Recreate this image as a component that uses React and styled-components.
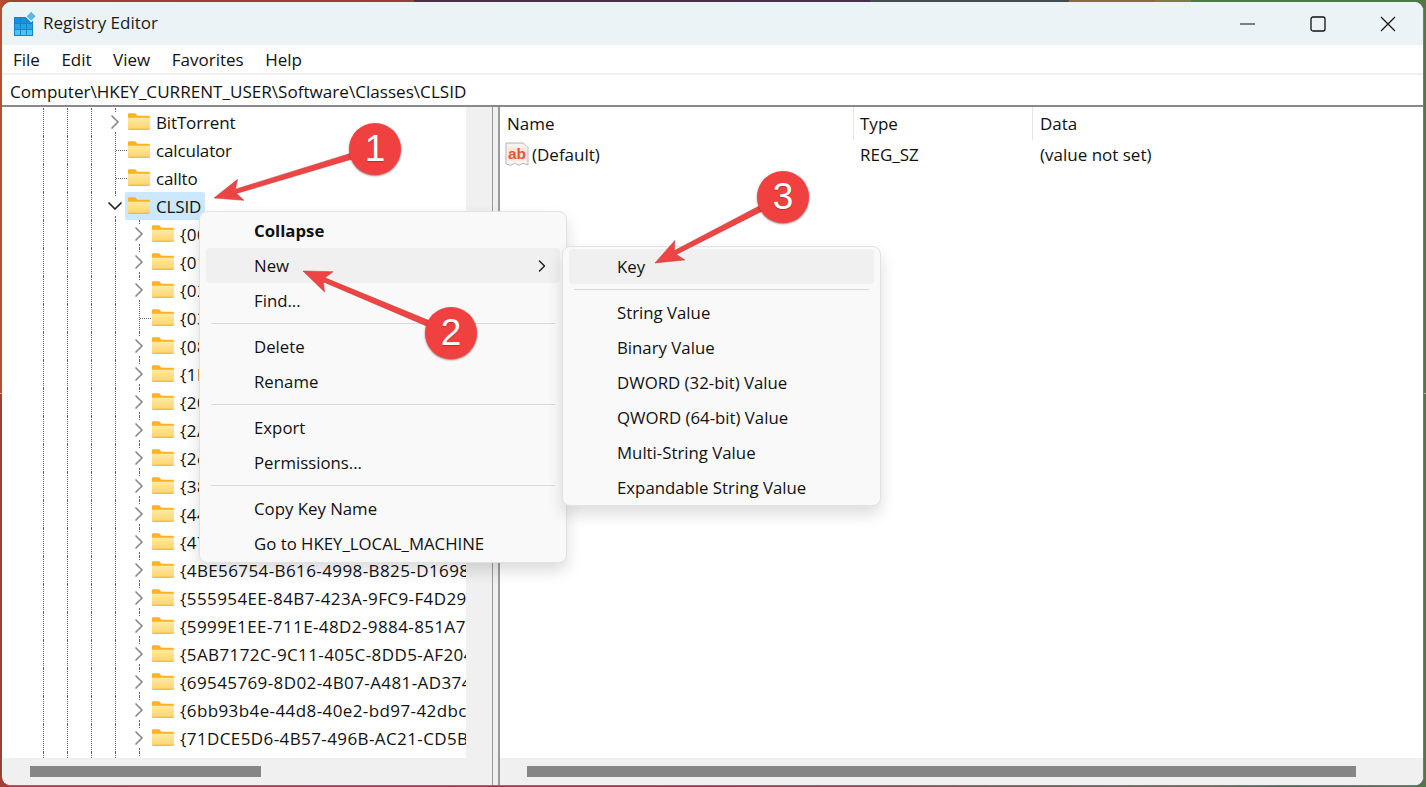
import React from 'react';
import styled, { createGlobalStyle } from 'styled-components';
import { ChevronRight, ChevronDown } from 'lucide-react';

const Global = createGlobalStyle`
  html, body { margin: 0; padding: 0; width: 1426px; height: 787px; overflow: hidden; }
  body { font-family: "Open Sans", "Noto Sans", sans-serif; color: #111; }
`;

const Desktop = styled.div`
  position: relative;
  width: 1426px;
  height: 787px;
  box-sizing: border-box;
  padding: 2px 2px 2px 2px;
  overflow: hidden;
  background:
    linear-gradient(90deg, #b9502f 0, #a03f38 1%, #983c3c 29%, #453048 29%, #45304c 61%, #3f4c50 61%, #3f4c50 75%, #8a6a45 75%, #8a6a45 81%, #7d7d45 81%, #7d7d45 83.5%, #4f7a45 83.5%, #4f7a45 100%) top / 100% 50% no-repeat,
    linear-gradient(90deg, #a03f38 0, #8f3a3a 50%, #7f5545 70%, #6e6a45 85%, #3f6a48 90%, #4f7a45 100%) bottom / 100% 50% no-repeat;
`;

const Window = styled.div`
  height: 100%;
  display: flex;
  flex-direction: column;
  background: #fff;
  border-radius: 9px;
  overflow: hidden;
  border-right: 1px solid #77777c;
  border-bottom: 1px solid #77777c;
`;

const TitleBar = styled.div`
  height: 43px;
  flex: none;
  display: flex;
  align-items: center;
  background: #ecf3f7;
  padding-left: 11px;
`;

const TitleText = styled.span`
  font-size: 17px;
  margin-left: 6px;
  flex: 1;
  color: #1a1a1a;
  transform: translateY(-1px);
`;

const WinButton = styled.div`
  width: 70px;
  height: 43px;
  display: flex;
  align-items: center;
  justify-content: center;
`;

const MenuBar = styled.div`
  height: 28px;
  flex: none;
  display: flex;
  align-items: center;
  gap: 21.5px;
  padding-left: 11px;
  font-size: 17px;
  background: #fff;
`;

const AddressBar = styled.div`
  height: 34px;
  flex: none;
  display: flex;
  align-items: center;
  box-sizing: border-box;
  padding: 2px 0 0 8px;
  font-size: 17.1px;
  background: #fff;
  border-top: 2px solid #f0f0f0;
  border-bottom: 2px solid #88888e;
  white-space: nowrap;
`;

const Panes = styled.div`
  flex: 1;
  min-height: 0;
  display: flex;
`;

const TreePane = styled.div`
  width: 489px;
  flex: none;
  display: flex;
  flex-direction: column;
  padding-left: 1px;
`;

const TreeBody = styled.div`
  flex: 1;
  min-height: 0;
  display: flex;
`;

const TreeList = styled.div`
  width: 463px;
  flex: none;
  overflow: hidden;
  padding-top: 1px;
`;

const VTrack = styled.div`
  flex: 1;
  background: #f0f0f0;
`;

const HTrack = styled.div`
  height: 27px;
  flex: none;
  background: #f0f0f0;
  display: flex;
  align-items: center;
  padding-left: ${p => p.$start}px;
`;

const Thumb = styled.div`
  width: ${p => p.$w}px;
  height: 11px;
  background: #868686;
`;

const Splitter = styled.div`
  flex: none;
  background: #f0f0f0;
  border-left: 1px solid #9a9a9a;
  border-right: 2px solid #9a9a9a;
  width: 5px;
`;

const ListPane = styled.div`
  flex: 1;
  min-width: 0;
  display: flex;
  flex-direction: column;
`;

const ListBody = styled.div`
  flex: 1;
  min-height: 0;
`;

const HeaderRow = styled.div`
  height: 33px;
  display: grid;
  grid-template-columns: 354px 179px 1fr;
  align-items: center;
  font-size: 17px;
`;

const HeaderCell = styled.div`
  height: 33px;
  display: flex;
  align-items: center;
  padding-left: ${p => p.$pad}px;
  box-sizing: border-box;
  border-right: ${p => (p.$sep ? '1px solid #e5e5e5' : 'none')};
`;

const ValueRow = styled.div`
  height: 28px;
  display: grid;
  grid-template-columns: 354px 179px 1fr;
  align-items: center;
  font-size: 17px;
`;

const ValueCell = styled.div`
  display: flex;
  align-items: center;
  gap: 3px;
  padding-left: ${p => p.$pad}px;
`;

const Row = styled.div`
  height: 28px;
  display: flex;
  align-items: stretch;
  font-size: 17px;
  white-space: nowrap;
`;

const Lead = styled.div`
  width: 40px;
  flex: none;
`;

const Guide = styled.div`
  width: ${p => (p.$short ? 12 : 24)}px;
  flex: none;
  box-sizing: border-box;
  border-left: 1px dotted #666;
`;

const Expander = styled.div`
  width: 24px;
  flex: none;
  display: flex;
  align-items: center;
  justify-content: center;
  position: relative;
  background-image: ${p => (p.$branch
    ? 'repeating-linear-gradient(0deg, #666 0 1px, transparent 1px 2px), repeating-linear-gradient(90deg, #666 0 1px, transparent 1px 2px)'
    : 'none')};
  background-size: 1px 100%, 11px 1px;
  background-position: 12px 0, 13px 14px;
  background-repeat: no-repeat;
  color: ${p => (p.$open ? '#222' : '#8a8a8a')};
  &::before, &::after {
    content: ${p => (p.$branch ? 'none' : "''")};
    position: absolute;
    left: 12px;
    height: 4px;
    border-left: 1px dotted #666;
  }
  &::before { top: 0; }
  &::after { bottom: 0; }
`;

const Node = styled.div`
  height: 28px;
  display: flex;
  align-items: center;
  flex: none;
  margin-left: -2px;
  padding: 0 4px 0 3px;
  border-radius: 2px;
  gap: 6px;
  background: ${p => (p.$selected ? '#cce8ff' : 'transparent')};
`;

const NodeLabel = styled.span`
  letter-spacing: ${p => (p.$guid ? '0.4px' : '-0.15px')};
`;

const FolderSvg = styled.svg`
  flex: none;
  margin-top: -2px;
`;

const MenuPanel = styled.div`
  position: absolute;
  left: ${p => p.$x}px;
  top: ${p => p.$y}px;
  width: ${p => p.$w}px;
  box-sizing: border-box;
  padding: ${p => p.$pad};
  background: #f9f9f9;
  border: 1px solid #e2e2e2;
  border-radius: 8px;
  box-shadow: 0 8px 16px rgba(0, 0, 0, 0.14);
  font-size: 16.8px;
  z-index: ${p => p.$z};
`;

const MenuItem = styled.div`
  height: 35px;
  margin: 0 6px;
  padding: 0 8px 0 48px;
  border-radius: 4px;
  display: flex;
  align-items: center;
  justify-content: space-between;
  box-sizing: border-box;
  color: #111;
  white-space: nowrap;
  background: ${p => (p.$hover ? '#f0f0f0' : 'transparent')};
  font-weight: ${p => (p.$bold ? 700 : 400)};
`;

const MenuSep = styled.div`
  height: 11px;
  margin: 0 11px;
  display: flex;
  align-items: center;
  &::after { content: ''; flex: 1; height: 1px; background: #d9d9d9; }
`;

const Overlay = styled.svg`
  position: absolute;
  left: 0;
  top: 0;
  width: 1426px;
  height: 787px;
  pointer-events: none;
  z-index: 5;
`;

const Badge = styled.div`
  position: absolute;
  left: ${p => p.$x - 26}px;
  top: ${p => p.$y - 26}px;
  width: 52px;
  height: 52px;
  border-radius: 50%;
  background: #f04040;
  box-shadow: 0 1px 2px rgba(90, 20, 20, 0.6);
  color: #fff;
  font-family: "Liberation Sans", Arial, sans-serif;
  font-size: 37px;
  line-height: 52px;
  text-align: center;
  text-shadow: 0 1px 1px rgba(0, 0, 0, 0.25);
  z-index: 6;
`;

const FolderIcon = () => (
  <FolderSvg width="22" height="17" viewBox="0 0 23 17">
    <defs>
      <linearGradient id="fold" x1="0" y1="0" x2="0" y2="1">
        <stop offset="0" stopColor="#ffe9a6" />
        <stop offset="1" stopColor="#fcd56a" />
      </linearGradient>
    </defs>
    <path d="M0 1.2C0 .5.5 0 1.2 0h5.6c.5 0 .9.2 1.2.5L10 2.5h12c.6 0 1 .4 1 1V5H0z" fill="#f6b420" />
    <path d="M0 4.5h23V16c0 .6-.4 1-1 1H1c-.6 0-1-.4-1-1z" fill="url(#fold)" />
    <path d="M0 16h23v.2c0 .5-.4.8-1 .8H1c-.6 0-1-.3-1-.8z" fill="#eeb030" />
  </FolderSvg>
);

const AppIcon = () => (
  <svg width="24" height="24" viewBox="0 0 24 24">
    <rect x="1" y="5" width="19" height="19" fill="#1483c8" />
    {[0, 1, 2].map(r => [0, 1, 2].map(c => (
      <rect key={`${r}${c}`} x={2 + c * 6} y={6 + r * 6} width="5" height="5" fill={r === 2 ? '#4cc3f5' : r === 1 ? '#2aa2e2' : '#1c8fd6'} />
    )))}
    <rect x="14.5" y="0.5" width="7.5" height="7.5" transform="rotate(45 18.2 4.2)" fill="#5cb8e8" stroke="#fff" strokeWidth="1" />
  </svg>
);

const AbIcon = () => (
  <svg width="24" height="25" viewBox="0 0 24 25">
    <path d="M1 1h17.5L23 5.5V23l-5-1.7-4 2-4.5-2-4 2L1 22z" fill="#f6f3f0" stroke="#b9b4b0" strokeWidth="1" />
    <path d="M2.5 5.5h19v13h-19z" fill="#fbe6de" />
    <text x="12" y="16.5" textAnchor="middle" fontFamily="Liberation Sans, sans-serif" fontWeight="700" fontSize="15.5" fill="#e4553a">ab</text>
  </svg>
);

const Arrow = ({ from, to }) => {
  const dx = to[0] - from[0];
  const dy = to[1] - from[1];
  const len = Math.hypot(dx, dy);
  const ux = dx / len;
  const uy = dy / len;
  const nx = -uy;
  const ny = ux;
  const at = (d, w) => `${to[0] - ux * d + nx * w},${to[1] - uy * d + ny * w}`;
  const points = [
    at(0, 0), at(28, 11), at(23, 2.2), at(len, 3.2),
    at(len, -3.2), at(23, -2.2), at(28, -11),
  ].join(' ');
  return <polygon points={points} fill="#ef4444" stroke="#b93a3a" strokeWidth="0.5" />;
};

const guid = [
  ['{00021401-0000-0000-C000-0000', true],
  ['{018D5C66-4533-4307-9B53-224D', true],
  ['{0271F1A3-F9AF-4A1E-8C1B-0A5B', true],
  ['{03ACC284-B757-4B8D-9C4C-0A5B', false],
  ['{0875DCB6-C686-4243-9432-ADCC', true],
  ['{1F76A169-F994-40AC-8FC8-0959', true],
  ['{20D04FE0-3AEA-1069-A2D8-08002', true],
  ['{2A3AD5C1-7A0D-4FF4-A8D2-1B3C', true],
  ['{2e9e59c0-b437-4981-a276-1a91', true],
  ['{38A98528-6CBF-4CA9-8DC0-B1E1', true],
  ['{445EB8F1-0A41-4A3C-9D5E-7B2F', true],
  ['{47A2B8F1-8A31-4C6A-B2D1-6E4F', true],
  ['{4BE56754-B616-4998-B825-D16982', true],
  ['{555954EE-84B7-423A-9FC9-F4D29D', true],
  ['{5999E1EE-711E-48D2-9884-851A70', true],
  ['{5AB7172C-9C11-405C-8DD5-AF2046', true],
  ['{69545769-8D02-4B07-A481-AD3740', true],
  ['{6bb93b4e-44d8-40e2-bd97-42dbcf', true],
  ['{71DCE5D6-4B57-496B-AC21-CD5B54', true],
];

const top = [
  ['BitTorrent', 'closed'],
  ['calculator', 'leaf'],
  ['callto', 'leaf'],
  ['CLSID', 'open'],
];

const menu1 = [
  [{ t: 'Collapse', bold: true }, { t: 'New', hover: true, sub: true }, { t: 'Find...' }],
  [{ t: 'Delete' }, { t: 'Rename' }],
  [{ t: 'Export' }, { t: 'Permissions...' }],
  [{ t: 'Copy Key Name' }, { t: 'Go to HKEY_LOCAL_MACHINE' }],
];

const menu2 = [
  [{ t: 'Key', hover: true }],
  [
    { t: 'String Value' }, { t: 'Binary Value' }, { t: 'DWORD (32-bit) Value' },
    { t: 'QWORD (64-bit) Value' }, { t: 'Multi-String Value' }, { t: 'Expandable String Value' },
  ],
];

const renderMenu = groups => groups.map((g, i) => (
  <React.Fragment key={i}>
    {i > 0 && <MenuSep />}
    {g.map(it => (
      <MenuItem key={it.t} $hover={it.hover} $bold={it.bold}>
        <span>{it.t}</span>
        {it.sub && <ChevronRight size={20} color="#222" strokeWidth={1.8} />}
      </MenuItem>
    ))}
  </React.Fragment>
));

export default function App() {
  return (
    <>
      <Global />
      <Desktop>
        <Window>
          <TitleBar>
            <AppIcon />
            <TitleText>Registry Editor</TitleText>
            <WinButton>
              <svg width="16" height="2" viewBox="0 0 16 2"><path d="M0 1h15" stroke="#111" strokeWidth="1.1" /></svg>
            </WinButton>
            <WinButton>
              <svg width="16" height="16" viewBox="0 0 16 16"><rect x="1" y="1" width="14" height="14" rx="2" fill="none" stroke="#111" strokeWidth="1.3" /></svg>
            </WinButton>
            <WinButton>
              <svg width="16" height="16" viewBox="0 0 16 16"><path d="M1 1l14 14M15 1L1 15" stroke="#111" strokeWidth="1.2" /></svg>
            </WinButton>
          </TitleBar>
          <MenuBar>
            <span>File</span><span>Edit</span><span>View</span><span>Favorites</span><span>Help</span>
          </MenuBar>
          <AddressBar>Computer\HKEY_CURRENT_USER\Software\Classes\CLSID</AddressBar>
          <Panes>
            <TreePane>
              <TreeBody>
                <TreeList>
                  {top.map(([name, kind]) => (
                    <Row key={name}>
                      <Lead /><Guide /><Guide /><Guide $short />
                      <Expander $open={kind === 'open'} $branch={kind === 'leaf'}>
                        {kind === 'closed' && <ChevronRight size={24} strokeWidth={1.7} />}
                        {kind === 'open' && <ChevronDown size={24} strokeWidth={1.7} />}
                      </Expander>
                      <Node $selected={kind === 'open'}><FolderIcon /><NodeLabel>{name}</NodeLabel></Node>
                    </Row>
                  ))}
                  {guid.map(([name, more]) => (
                    <Row key={name}>
                      <Lead /><Guide /><Guide /><Guide /><Guide $short />
                      <Expander $branch={!more}>
                        {more && <ChevronRight size={24} strokeWidth={1.7} />}
                      </Expander>
                      <Node><FolderIcon /><NodeLabel $guid>{name}</NodeLabel></Node>
                    </Row>
                  ))}
                  <Row>
                    <Lead /><Guide /><Guide /><Guide /><Guide $short />
                    <Expander />
                  </Row>
                </TreeList>
                <VTrack />
              </TreeBody>
              <HTrack $start={27}><Thumb $w={231} /></HTrack>
            </TreePane>
            <Splitter />
            <ListPane>
              <ListBody>
                <HeaderRow>
                  <HeaderCell $pad={7} $sep>Name</HeaderCell>
                  <HeaderCell $pad={6} $sep>Type</HeaderCell>
                  <HeaderCell $pad={7}>Data</HeaderCell>
                </HeaderRow>
                <ValueRow>
                  <ValueCell $pad={5}><AbIcon /><span>(Default)</span></ValueCell>
                  <ValueCell $pad={6}>REG_SZ</ValueCell>
                  <ValueCell $pad={7}>(value not set)</ValueCell>
                </ValueRow>
              </ListBody>
              <HTrack $start={27}><Thumb $w={829} /></HTrack>
            </ListPane>
          </Panes>
        </Window>

        <MenuPanel $x={199} $y={211} $w={368} $pad="1px 0" $z={2}>{renderMenu(menu1)}</MenuPanel>
        <MenuPanel $x={562} $y={246} $w={319} $pad="2px 0 0" $z={3}>{renderMenu(menu2)}</MenuPanel>

        <Overlay viewBox="0 0 1426 787">
          <Arrow from={[375, 149]} to={[214, 198]} />
          <Arrow from={[451, 333]} to={[303, 271]} />
          <Arrow from={[783, 197]} to={[655, 263]} />
        </Overlay>
        <Badge $x={375} $y={149}>1</Badge>
        <Badge $x={451} $y={333}>2</Badge>
        <Badge $x={783} $y={197}>3</Badge>
      </Desktop>
    </>
  );
}
